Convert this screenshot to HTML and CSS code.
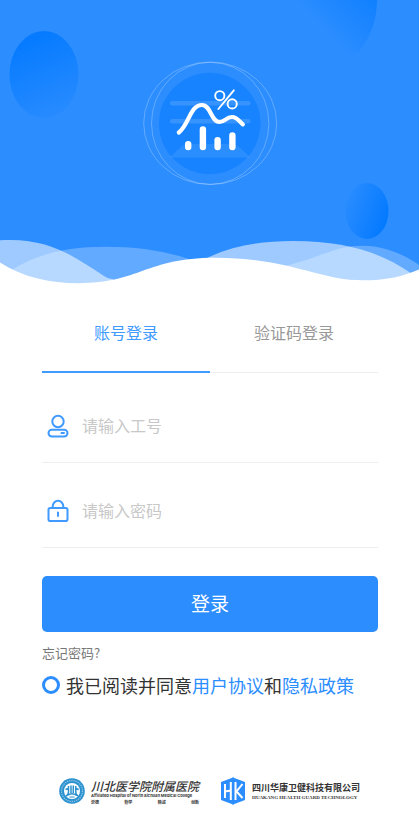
FILE: index.html
```html
<!DOCTYPE html>
<html lang="zh-CN">
<head>
    <meta charset="UTF-8">
    <meta name="viewport" content="width=device-width, initial-scale=1.0">
    <title>登录</title>
    <link rel="stylesheet" href="styles.css">
</head>
<body>
    <!-- Banner -->
    <svg class="banner" viewBox="0 0 419 284" aria-hidden="true">
        <defs>
            <linearGradient id="blob-left" x1="0.3" y1="0.1" x2="0.65" y2="1.1">
                <stop offset="0" stop-color="#067bff"/>
                <stop offset="1" stop-color="#2c8dff"/>
            </linearGradient>
            <linearGradient id="blob-top" x1="1" y1="0.5" x2="0.71" y2="0.84">
                <stop offset="0" stop-color="#1080ff"/>
                <stop offset="1" stop-color="#2c8dff"/>
            </linearGradient>
            <linearGradient id="blob-right" x1="0.95" y1="0.65" x2="0" y2="0.2">
                <stop offset="0" stop-color="#047aff"/>
                <stop offset="1" stop-color="#2c8dff"/>
            </linearGradient>
        </defs>
        <rect width="419" height="284" fill="#2c8dff"/>
        <ellipse cx="44" cy="74.500" rx="34.500" ry="43.500" fill="url(#blob-left)"/>
        <ellipse cx="317" cy="0" rx="60" ry="72" fill="url(#blob-top)"/>
        <ellipse cx="367" cy="211" rx="21.500" ry="28" fill="url(#blob-right)"/>

        <!-- Chart emblem -->
        <g fill="none" stroke="#fff" stroke-opacity="0.25">
            <ellipse cx="210.200" cy="123.300" rx="66.500" ry="61.300"/>
            <ellipse cx="210.200" cy="123.300" rx="58.700" ry="61"/>
        </g>
        <circle cx="209.700" cy="123.500" r="50.700" fill="#1783ff"/>
        <g fill="#fff" fill-opacity="0.14">
            <rect x="170" y="101" width="80.500" height="4.500" rx="2.200"/>
            <rect x="170" y="119" width="80.500" height="4.500" rx="2.200"/>
            <path fill-opacity="0.09" d="M188 144h44q4 0 7 3l11.500 10.500h-81L181 147q3-3 7-3z"/>
        </g>
        <g fill="none" stroke="#fff" stroke-linecap="round">
            <path stroke-width="4.200" d="M178.800 132.500C189 125 190 105 202 105C211 105 211 122 219.500 122C225 122 226 117 232 117C237 117 239 121 242.800 124.300"/>
            <path stroke-width="6.400" d="M188.200 144.200v2.800M202.900 129.500v17.500M217.600 140.200v6.800M232.400 135.500v11.500"/>
            <g stroke-width="1.900">
                <circle cx="219.800" cy="95.700" r="4.600"/>
                <circle cx="232.200" cy="103.900" r="4.600"/>
                <path d="M233.800 90.300L218.400 109"/>
            </g>
        </g>

        <!-- Waves -->
        <g fill="#fff">
            <path fill-opacity="0.26" d="M13 269C40 253 68 246.700 105 246.700C138 246.700 166 251 190 259.500V284H13z"/>
            <path fill-opacity="0.26" d="M286 265.500C320 258 333 245.700 363 245.700C385 245.700 405 255 419 265V284H286z"/>
            <path fill-opacity="0.54" d="M0 240.300C50 237 76 258 104 276Q108 279 113 279.300V284H0z"/>
            <path fill-opacity="0.54" d="M205 259C230 246 260 241 293 241C345 241 380 252 410 272.500V284H205z"/>
            <path d="M0 262.500C22 277 50 283.200 78 283.200C140 283.200 145 258 215 257.800C290 257.800 318 280.300 363 280.300C385 280.300 402 277 419 269.500V285H0z"/>
        </g>
    </svg>

    <!-- Login form -->
    <form class="login">
        <div class="tabs">
            <button type="button" class="tab active">账号登录</button>
            <button type="button" class="tab">验证码登录</button>
        </div>

        <div class="field">
            <label for="account" aria-label="工号">
                <svg class="icon" viewBox="0 0 24 24">
                    <circle cx="12" cy="7.500" r="5.700"/>
                    <rect x="2.500" y="15.800" width="19" height="6.600" rx="3.300"/>
                    <path d="M15.500 19h2.500"/>
                </svg>
            </label>
            <input type="text" id="account" placeholder="请输入工号">
        </div>

        <div class="field">
            <label for="password" aria-label="密码">
                <svg class="icon" viewBox="0 0 24 24">
                    <rect x="2.500" y="9" width="19" height="13" rx="1.800"/>
                    <path d="M6.700 9V7.500a5.300 5.700 0 0 1 10.600 0V9M12 13.500v3.500"/>
                </svg>
            </label>
            <input type="password" id="password" placeholder="请输入密码">
        </div>

        <button type="submit" class="submit">登录</button>
        <a href="#" class="forgot">忘记密码?</a>

        <div class="agreement">
            <input type="checkbox" id="agree">
            <label for="agree">我已阅读并同意<a href="#">用户协议</a>和<a href="#">隐私政策</a></label>
        </div>
    </form>

    <!-- Partners -->
    <footer class="partners">
        <div class="partner">
            <svg class="logo" viewBox="0 0 26 28" aria-hidden="true">
                <circle cx="13" cy="14" r="12.800" fill="#2b91cf"/>
                <circle cx="13" cy="14" r="10.500" fill="none" stroke="#8cc5e6" stroke-width="1.300" stroke-dasharray="1.300 0.900"/>
                <circle cx="13" cy="14" r="8" fill="#fff"/>
                <path d="M9.500 9v6q0 3-2.500 4M12 8.500v7.500M14.300 8.500v7.500M16.800 9v6q0 3 2.500 4M6.500 12.500l3-1M16.800 11.500l3 1M8 18.500q5-3.500 10 0" fill="none" stroke="#2b91cf" stroke-width="1.500"/>
                <path d="M10.500 20h5" stroke="#2b91cf"/>
            </svg>
            <div class="hospital">
                <div class="hospital-name">川北医学院附属医院</div>
                <div class="hospital-en">Affiliated Hospital of North Sichuan Medical College</div>
                <div class="motto"><span>崇德</span><span>勤学</span><span>精诚</span><span>创新</span></div>
            </div>
        </div>
        <div class="partner">
            <svg class="logo" viewBox="0 0 26 28" aria-hidden="true">
                <path d="M1 5L13 0.500L25 5V23L13 27.500L1 23z" fill="#2c8dff"/>
                <path d="M5 7v14M10.800 5v18M5 14.500l5.800-1M15.500 5v18M22.500 7l-6 7.500l6 6.500" fill="none" stroke="#fff" stroke-width="2"/>
                <path d="M13.200 0.500v27" stroke="#2c8dff" stroke-width="1.400"/>
            </svg>
            <div class="company">
                <div class="company-name">四川华康卫健科技有限公司</div>
                <div class="company-en">HUAKANG HEALTH GUARD TECHNOLOGY</div>
            </div>
        </div>
    </footer>
</body>
</html>
```

FILE: styles.css
```css
* {
    box-sizing: border-box;
}
body {
    margin: 0;
    background-color: #fff;
    color: #333;
    font-family: "Noto Sans CJK SC", sans-serif;
}
button,
input {
    margin: 0;
    padding: 0;
    border: 0;
    background: none;
    font-family: inherit;
}
a {
    color: #2c8dff;
    text-decoration: none;
}
.banner {
    display: block;
    width: 100%;
}
.login {
    display: flex;
    flex-direction: column;
    padding: 9px 41px 0 42px;
}
.tabs {
    display: flex;
    margin-bottom: 5px;
}
.tab {
    flex: 1;
    height: 80px;
    padding-bottom: 1px;
    border-bottom: 1px solid #eee;
    color: #999;
    font-size: 16px;
}
.tab.active {
    padding-bottom: 0;
    border-bottom: 2px solid #409aff;
    color: #409aff;
}
.field {
    display: flex;
    align-items: center;
    gap: 12px;
    padding: 36px 4px 24px;
    border-bottom: 1px solid #eee;
}
.field label {
    display: flex;
}
.field input {
    flex: 1;
    min-width: 0;
    height: 24px;
    padding-bottom: 2px;
    outline: none;
    font-size: 16px;
}
.field input::placeholder {
    color: #c8c8c8;
}
.icon {
    width: 24px;
    height: 24px;
    fill: none;
    stroke: #409aff;
    stroke-width: 2;
    stroke-linecap: round;
}
.submit {
    height: 56px;
    margin-top: 28px;
    padding-bottom: 4px;
    border-radius: 5px;
    background-color: #2c8dff;
    color: #fff;
    font-size: 19px;
}
.forgot {
    align-self: flex-start;
    margin-top: 11px;
    color: #777;
    font-size: 13px;
    line-height: 20px;
}
.agreement {
    display: flex;
    align-items: center;
    gap: 6px;
    margin-top: 10px;
    font-size: 18px;
    line-height: 24px;
    white-space: nowrap;
}
.agreement input {
    width: 18px;
    height: 18px;
    border: 3px solid #2c8dff;
    border-radius: 50%;
    appearance: none;
}
.agreement input:checked {
    background-color: #2c8dff;
}
.partners {
    display: flex;
    justify-content: center;
    gap: 21px;
    margin-top: 80px;
}
.partner {
    display: flex;
    align-items: center;
    gap: 6px;
    white-space: nowrap;
}
.logo {
    width: 26px;
    height: 28px;
}
.hospital-name {
    font-size: 12px;
    font-style: italic;
    font-weight: 500;
    line-height: 15px;
}
.hospital-en {
    font-family: Inter, Arial, sans-serif;
    font-size: 4px;
    font-weight: bold;
    line-height: 6px;
}
.motto {
    display: flex;
    justify-content: space-between;
    font-size: 4px;
    font-weight: bold;
    line-height: 6px;
}
.company-name {
    font-size: 9px;
    font-weight: bold;
    line-height: 13px;
}
.company-en {
    font-family: "Liberation Serif", "Times New Roman", serif;
    font-size: 5px;
    font-weight: bold;
    line-height: 7px;
}
```
